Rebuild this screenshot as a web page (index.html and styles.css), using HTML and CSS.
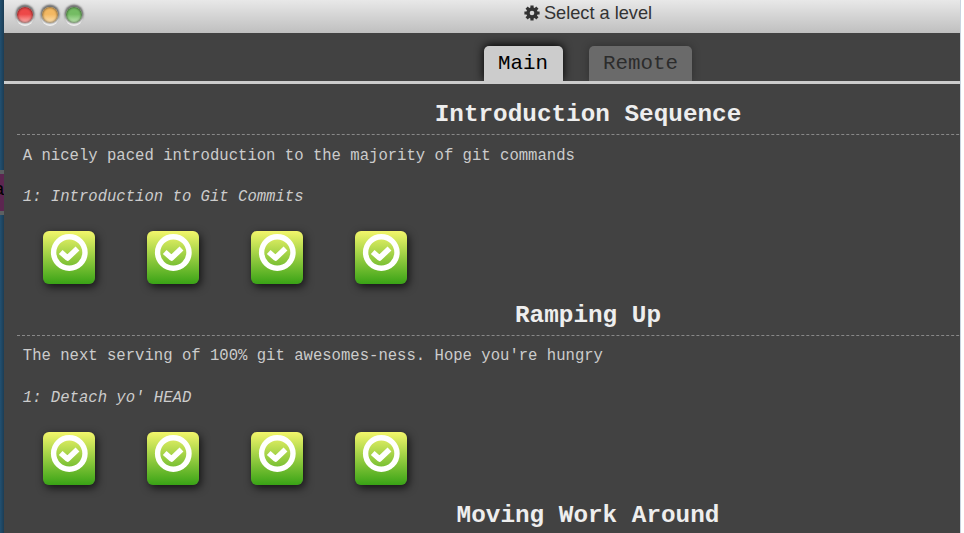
FILE: index.html
```html
<!DOCTYPE html>
<html lang="en">
<head>
<meta charset="utf-8">
<title>Select a level</title>
<link rel="stylesheet" href="styles.css">
</head>
<body>
<svg class="defs" width="0" height="0" aria-hidden="true">
  <symbol id="ok" viewBox="0 0 38 38">
    <circle cx="19.3" cy="18.5" r="15.7" fill="none" stroke="#fff" stroke-width="5.4"/>
    <path d="M10.7 18 L17.5 24 L27.5 14.5" fill="none" stroke="#fff" stroke-width="5.6" stroke-linejoin="round"/>
  </symbol>
</svg>
<div class="screen">
  <div class="commit">a</div>
  <div class="window">
    <header class="titlebar">
      <div class="lights"><i class="light red"></i><i class="light amber"></i><i class="light green"></i></div>
      <svg class="gear" viewBox="0 0 16 16"><g fill="#333"><path d="M6.4 .4h3.2v15.2h-3.2z"/><path d="M6.4 .4h3.2v15.2h-3.2z" transform="rotate(45 8 8)"/><path d="M6.4 .4h3.2v15.2h-3.2z" transform="rotate(90 8 8)"/><path d="M6.4 .4h3.2v15.2h-3.2z" transform="rotate(135 8 8)"/><circle cx="8" cy="8" r="5.7"/></g><circle cx="8" cy="8" r="2.3" fill="#d7d7d7"/></svg>
      <span>Select a level</span>
    </header>
    <nav class="tabs"><div class="tab active">Main</div><div class="tab">Remote</div></nav>
    <main class="levels">
      <section>
        <h3>Introduction Sequence</h3>
        <p>A nicely paced introduction to the majority of git commands</p>
        <p class="name">1: Introduction to Git Commits</p>
        <div class="icons"><div class="level"><svg><use href="#ok"/></svg></div><div class="level"><svg><use href="#ok"/></svg></div><div class="level"><svg><use href="#ok"/></svg></div><div class="level"><svg><use href="#ok"/></svg></div></div>
      </section>
      <section>
        <h3>Ramping Up</h3>
        <p>The next serving of 100% git awesomes-ness. Hope you're hungry</p>
        <p class="name">1: Detach yo' HEAD</p>
        <div class="icons"><div class="level"><svg><use href="#ok"/></svg></div><div class="level"><svg><use href="#ok"/></svg></div><div class="level"><svg><use href="#ok"/></svg></div><div class="level"><svg><use href="#ok"/></svg></div></div>
      </section>
      <section>
        <h3>Moving Work Around</h3>
      </section>
    </main>
  </div>
</div>
</body>
</html>
```
FILE: styles.css
```css
* { box-sizing: border-box; }
body { margin: 0; background: #fff; overflow: hidden; }
.defs { position: absolute; }
.screen {
  position: relative;
  width: 961px;
  height: 533px;
  padding-left: 4px;
  overflow: hidden;
  background: linear-gradient(90deg, #235070, #1b3d55 4px, #c9d4e0 5px);
}
.commit {
  position: absolute;
  left: -8px;
  top: 170px;
  width: 14px;
  height: 45px;
  padding-left: 2px;
  border: solid #5c6062;
  border-width: 4px 0;
  background: #5c2650;
  color: #000;
  font: 18px/31px "Liberation Sans", sans-serif;
}
.window {
  position: relative;
  width: 956px;
  height: 533px;
  overflow: hidden;
  background: #424242;
}
.titlebar, .tabs, .levels { width: 1168px; }
.titlebar {
  position: relative;
  display: flex;
  justify-content: center;
  align-items: center;
  gap: 4px;
  height: 33px;
  padding-bottom: 7px;
  background: linear-gradient(#e8e8e8, #bfbfbf);
  color: #333;
  font: 18.2px/26px "Liberation Sans", sans-serif;
}
.gear { width: 16px; height: 16px; margin-top: -1px; }
.lights { position: absolute; left: 13px; top: 7px; display: flex; gap: 8.7px; }
.light {
  width: 16px;
  height: 16px;
  border-radius: 50%;
  box-shadow: 0 -1px 2px 1.5px rgba(0,0,0,.5), 0 2px 0 1px #f3f3f3, inset 0 0 2px 1px rgba(0,0,0,.4);
}
.red { background: linear-gradient(#ed4848 45%, #ffb7b3); }
.amber { background: linear-gradient(#f3b862 45%, #ffe4b5); }
.green { background: linear-gradient(#74bc63 45%, #c2e8b5); }
.tabs {
  display: flex;
  justify-content: center;
  gap: 26px;
  height: 51px;
  padding-top: 13px;
  border-bottom: 3px solid #ccc;
  font: 20.8px/36px "Liberation Mono", monospace;
}
.tab {
  height: 35px;
  padding: 0 14.5px;
  border-radius: 5px 5px 0 0;
  background: #6a6a6a;
  color: #2c2c2c;
  box-shadow: 0 0 8px rgba(0,0,0,.3);
  clip-path: inset(-12px -12px 0);
}
.active { background: #ccc; color: #000; box-shadow: 0 -1px 10px #000; }
.levels { padding: 13px 13px 0; font: 15.6px/20px "Liberation Mono", monospace; color: #ccc; }
section { height: 200.5px; }
h3 {
  height: 38px;
  margin: 0;
  border-bottom: 1px dashed #888;
  color: #eee;
  text-align: center;
  font-size: 24.34px;
  line-height: 36px;
}
p { margin: 11px 0 0 5.8px; }
section + section p:not(.name) { margin-top: 10px; }
section + section .name { margin-top: 22px; }
.name { margin-top: 21px; font-style: italic; }
.icons { display: flex; gap: 52px; margin: 24px 0 0 26px; }
.level {
  width: 52px;
  height: 53px;
  padding: 3px 0 0 7px;
  border-radius: 6px;
  background: linear-gradient(#f3f66b, #39a316);
  box-shadow: 2px 3px 8px rgba(0,0,0,.7);
}
.level svg { display: block; width: 38px; height: 38px; }
```
